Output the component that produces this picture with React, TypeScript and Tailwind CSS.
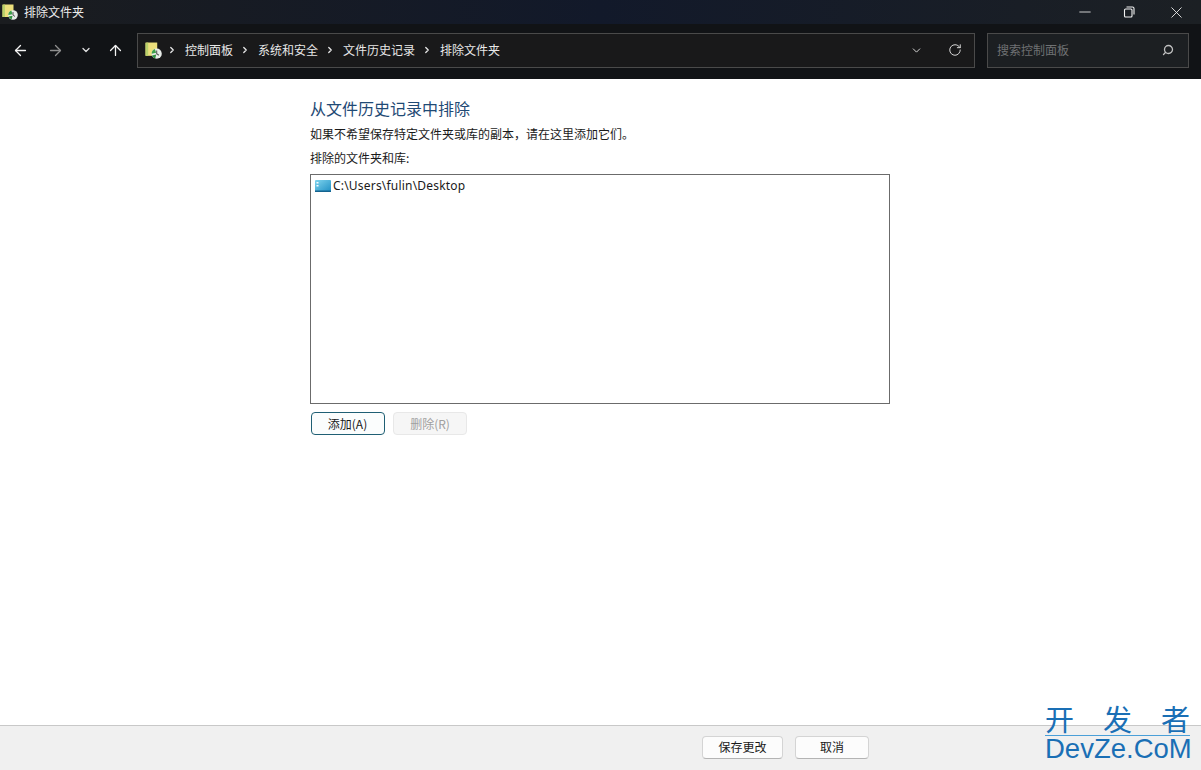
import { ArrowLeft, ArrowRight, ArrowUp, ChevronDown, ChevronRight, RotateCw, Search, X, Minus } from 'lucide-react';

const font = { fontFamily: '"Noto Sans CJK SC", sans-serif' };
const crumbs = ['控制面板', '系统和安全', '文件历史记录', '排除文件夹'];

function HistoryIcon({ size }: { size: number }) {
  return (
    <svg width={size} height={size} viewBox="0 0 16 16" className="shrink-0">
      <rect x="0.5" y="0.5" width="11" height="12.5" fill="#ecdf7c" />
      <path d="M0.5 13 V1 L3 0.5 V13 Z" fill="#b9d06a" />
      <circle cx="11" cy="11" r="4.8" fill="#e8ece8" />
      <path d="M6.3 11 a4.8 4.8 0 0 1 3-4.4 l1.2 3.6 Z" fill="#3da04a" />
      <path d="M6.6 12.6 a4.8 4.8 0 0 0 3 3 l1-3.8 Z" fill="#2f8f3e" />
      <path d="M11 8 V11 L13 12.5" stroke="#555" strokeWidth="1" fill="none" />
    </svg>
  );
}

function FolderIcon() {
  return (
    <svg width="16" height="14" viewBox="0 0 16 14" className="shrink-0">
      <defs>
        <linearGradient id="desk" x1="0" y1="0" x2="1" y2="1">
          <stop offset="0" stopColor="#7fd4ee" />
          <stop offset="1" stopColor="#1f8fc4" />
        </linearGradient>
      </defs>
      <rect x="0" y="1" width="16" height="12" rx="1" fill="url(#desk)" />
      <rect x="1.5" y="3" width="2" height="1.5" fill="#f4fbff" />
      <rect x="1.5" y="6" width="2" height="1.5" fill="#f4fbff" />
      <rect x="0" y="11.5" width="16" height="1.5" fill="#14638f" />
    </svg>
  );
}

function RestoreIcon() {
  return (
    <svg width="12" height="12" viewBox="0 0 12 12" fill="none" stroke="#f2f2f2" strokeWidth="1.1">
      <rect x="1.5" y="3" width="7.5" height="8" rx="1" />
      <path d="M3.5 1 H9.5 a1.5 1.5 0 0 1 1.5 1.5 V8.5" />
    </svg>
  );
}

export default function App() {
  return (
    <div className="relative flex h-[770px] w-[1201px] flex-col overflow-hidden bg-white" style={font}>
      <div className="flex h-[24px] items-center bg-gradient-to-r from-[#1a1c1f] via-[#12192a] to-[#1c2024] pl-[2px]">
        <HistoryIcon size={16} />
        <span className="ml-[6px] text-[12px] text-[#ececec]">排除文件夹</span>
        <div className="ml-auto flex items-center">
          <Minus size={18} strokeWidth={1.1} className="mr-[29px] text-[#f2f2f2]" />
          <RestoreIcon />
          <X size={19} strokeWidth={1.1} className="ml-[32px] mr-[15px] text-[#f2f2f2]" />
        </div>
      </div>

      <div className="flex h-[55px] items-center bg-[#111316] pb-[3px]">
        <div className="flex w-[137px] items-center pl-[12px]">
          <ArrowLeft size={17} strokeWidth={1.8} className="text-[#f4f4f4]" />
          <ArrowRight size={17} strokeWidth={1.8} className="ml-[18px] text-[#8f8f8f]" />
          <ChevronDown size={12} strokeWidth={2.6} className="ml-[16px] text-[#e0e0e0]" />
          <ArrowUp size={17} strokeWidth={1.8} className="ml-[15px] text-[#f4f4f4]" />
        </div>

        <div className="flex h-[35px] w-[838px] items-center border border-[#4a4a4a] bg-[#19191a] pl-[7px]">
          <HistoryIcon size={17} />
          {crumbs.map((c, i) => (
            <div key={c} className={i === 0 ? 'flex items-center -ml-[2px]' : 'flex items-center'}>
              <ChevronRight size={10} strokeWidth={3} className="ml-[7px] mr-[8px] text-[#e8e8e8]" />
              <span className="text-[12px] text-[#e8e8e8]">{c}</span>
            </div>
          ))}
          <ChevronDown size={13} strokeWidth={1.8} className="ml-auto text-[#d8d8d8]" />
          <RotateCw size={14} strokeWidth={1.7} className="ml-[25px] mr-[12px] text-[#d8d8d8]" />
        </div>

        <div className="ml-[12px] flex h-[35px] w-[202px] items-center border border-[#4a4a4a] bg-[#1c1f22] pl-[9px] pr-[14px]">
          <span className="text-[12px] text-[#6f7173]">搜索控制面板</span>
          <Search size={12} strokeWidth={2.6} className="ml-auto -scale-x-100 text-[#c0c0c0]" />
        </div>
      </div>

      <div className="flex flex-1 flex-col pl-[310px] pt-[18px]">
        <h1 className="text-[16px] leading-[22px] font-normal text-[#1f4a75]">从文件历史记录中排除</h1>
        <p className="mt-[7px] text-[12px] leading-[16px] text-[#1a1a1a]">如果不希望保存特定文件夹或库的副本，请在这里添加它们。</p>
        <p className="mt-[8px] text-[12px] leading-[16px] text-[#1a1a1a]">排除的文件夹和库:</p>
        <div className="mt-[8px] h-[230px] w-[580px] border border-[#6b6b6b] px-[4px] pt-[3px]">
          <div className="flex h-[16px] items-center gap-[2px]">
            <FolderIcon />
            <span className="text-[12px] tracking-[0.2px] text-[#1a1a1a]" style={{ fontFamily: '"Noto Sans", sans-serif' }}>C:\Users\fulin\Desktop</span>
          </div>
        </div>
        <div className="mt-[8px] flex gap-[8px] pl-[1px]">
          <button className="h-[23px] w-[74px] rounded-[4px] border border-[#1f5f74] bg-[#fbfdfd] pr-[1px] text-[12px] text-[#1a1a1a]">添加(A)</button>
          <button className="h-[23px] w-[74px] rounded-[4px] border border-[#e8e8e8] bg-[#f6f6f6] text-[12px] text-[#a0a0a0]">删除(R)</button>
        </div>
      </div>

      <div className="flex h-[45px] items-center border-t border-[#c8c8c8] bg-[#f0f0f0] pb-[2px] pl-[702px]">
        <button className="h-[23px] w-[81px] rounded-[4px] border border-[#d4d4d4] border-b-[#b4b4b4] bg-[#fcfcfc] text-[12px] text-[#1a1a1a]">保存更改</button>
        <button className="ml-[12px] h-[23px] w-[74px] rounded-[4px] border border-[#d4d4d4] border-b-[#b4b4b4] bg-[#fcfcfc] text-[12px] text-[#1a1a1a]">取消</button>
      </div>

      {/* watermark sits over the footer */}
      <div className="absolute right-[11px] top-[703px] flex w-[145px] flex-col text-[#1a6fb5]">
        <div className="flex h-[33px] items-start justify-between border-b border-[#4a9fd8] text-[29px] leading-[30px]">
          <span className="h-[30px]">开</span>
          <span className="h-[30px]">发</span>
          <span className="h-[30px]">者</span>
        </div>
        <div className="mt-[1px] h-[24px] whitespace-nowrap text-[27.5px] leading-[24px]" style={{ fontFamily: '"Liberation Sans", sans-serif' }}>DevZe.CoM</div>
      </div>
    </div>
  );
}
